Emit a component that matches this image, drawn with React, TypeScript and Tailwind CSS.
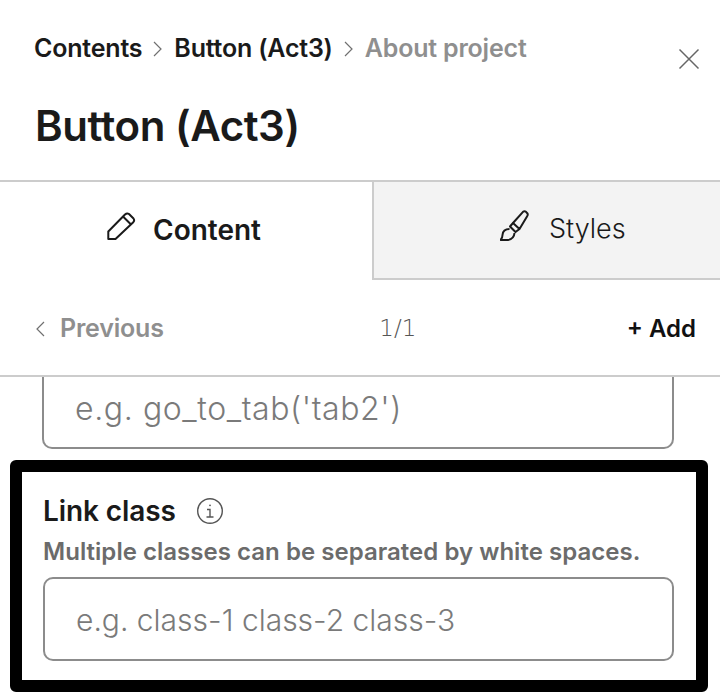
function Chevron({ left = false, className = "" }: { left?: boolean; className?: string }) {
  return (
    <svg width="12" height="20" viewBox="0 0 12 20" fill="none" stroke="currentColor" strokeWidth="1.2" className={className}>
      <path d={left ? "M10 3 L3 10 L10 17" : "M2 3 L9 10 L2 17"} />
    </svg>
  );
}

function PencilIcon() {
  return (
    <svg width="30" height="40" viewBox="6 5 30 40" fill="none" stroke="#1a1a1a" strokeWidth="2" strokeLinejoin="round">
      <path d="M8.3 25.5 L25 8.5 Q27 6.7 29 8 L33.5 12.5 Q35 14.5 33 16.5 L15.5 33 L8.3 33 Z" />
      <path d="M23 10.5 L31 18.5" />
    </svg>
  );
}

function BrushIcon() {
  return (
    <svg width="32" height="40" viewBox="10 5 32 40" fill="none" stroke="#1a1a1a" strokeWidth="2" strokeLinejoin="round">
      <path d="M23 18 L33 6.8 Q34.5 5.6 36 6.8 L37.5 8.5 Q38.2 10 37 11.5 L29.5 24 Z" />
      <path d="M23 18 L20 21.5 L25.5 27 L29.5 24" />
      <path d="M19.5 24 Q13 24 12.5 30 Q12.5 33 10.5 35 L18 35 Q24 34 24.5 28" />
    </svg>
  );
}

function InfoIcon() {
  return (
    <svg width="28" height="28" viewBox="0 0 28 28" fill="none" stroke="#555" strokeWidth="1.4">
      <circle cx="14" cy="14" r="12.3" />
      <path d="M11 12.5 H14 V20 M10.5 20 H17.5" />
      <circle cx="14" cy="8.3" r="0.9" fill="#555" stroke="none" />
    </svg>
  );
}

function Field({ placeholder, clipped = false }: { placeholder: string; clipped?: boolean }) {
  return (
    <input
      readOnly
      placeholder={placeholder}
      className={`w-full bg-white pl-[31px] font-light text-[#1a1a1a] placeholder:text-[#7a7a7a] outline-none border-2 border-[#8c8c8c] ${
        clipped
          ? "h-[72px] rounded-b-[10px] border-t-0 pb-[8px] text-[32px] tracking-[0.6px]"
          : "h-[84px] rounded-[10px] pt-[2px] text-[30px]"
      }`}
    />
  );
}

export default function App() {
  return (
    <div className="w-[720px] h-[700px] overflow-hidden bg-white font-['Inter','Noto_Sans',sans-serif] text-[#1a1a1a]">
      <div className="h-[180px] pl-[34px] pr-[20px] pt-[33px]">
        <div className="flex items-start justify-between">
          <div className="flex items-center h-[32px] text-[25px] font-semibold tracking-[-0.2px]">
            <span>Contents</span>
            <Chevron className="mx-[10px] text-[#707070]" />
            <span>Button (Act3)</span>
            <Chevron className="mx-[10px] text-[#707070]" />
            <span className="text-[#8f8f8f]">About project</span>
          </div>
          <svg width="22" height="22" viewBox="0 0 22 22" fill="none" stroke="#666" strokeWidth="1.5" className="mt-[15px]">
            <path d="M1.5 1.5 L20.5 20.5 M20.5 1.5 L1.5 20.5" />
          </svg>
        </div>
        <h1 className="mt-[32px] text-[42px] leading-[48px] font-semibold tracking-[-0.45px] pl-[1px]">Button (Act3)</h1>
      </div>

      <div className="flex h-[100px]">
        <div className="w-[372px] border-t-2 border-[#cccccc] flex items-center pl-[106px] gap-[17px] text-[28px] font-semibold">
          <PencilIcon />
          <span className="pb-[2px]">Content</span>
        </div>
        <div className="flex-1 border-t-2 border-l-2 border-b-2 border-[#cccccc] bg-[#f3f3f3] flex items-center pl-[126px] gap-[17px] text-[27px] font-light">
          <BrushIcon />
          <span className="pb-[2px]">Styles</span>
        </div>
      </div>

      <div className="flex h-[97px] items-center justify-between pl-[34px] pr-[24px] pt-[2px] border-b-2 border-[#cccccc]">
        <div className="flex items-center gap-[14px] w-[200px] text-[25px] font-semibold text-[#8f8f8f] tracking-[-0.2px]">
          <Chevron left className="text-[#707070]" />
          <span>Previous</span>
        </div>
        <span className="text-[23px] font-['DejaVu_Sans',sans-serif] font-extralight text-[#555] pr-[65px]">1/1</span>
        <span className="text-[24px] font-semibold text-[#111]">+ Add</span>
      </div>

      <div className="px-[42px] w-[716px]">
        <Field clipped placeholder="e.g. go_to_tab('tab2')" />
      </div>

      <div className="mt-[11px] ml-[10px] w-[698px] h-[232px] rounded-[6px] border-[12px] border-black bg-white pl-[21px] pr-[22px] pt-[20px]">
        <div className="flex items-center gap-[20px] h-[38px]">
          <span className="text-[28px] font-semibold tracking-[-0.1px]">Link class</span>
          <InfoIcon />
        </div>
        <p className="mt-[7px] text-[24px] leading-[30px] font-semibold tracking-[0.03px] text-[#6b6b6b] whitespace-nowrap">
          Multiple classes can be separated by white spaces.
        </p>
        <div className="mt-[10px]">
          <Field placeholder="e.g. class-1 class-2 class-3" />
        </div>
      </div>
    </div>
  );
}
